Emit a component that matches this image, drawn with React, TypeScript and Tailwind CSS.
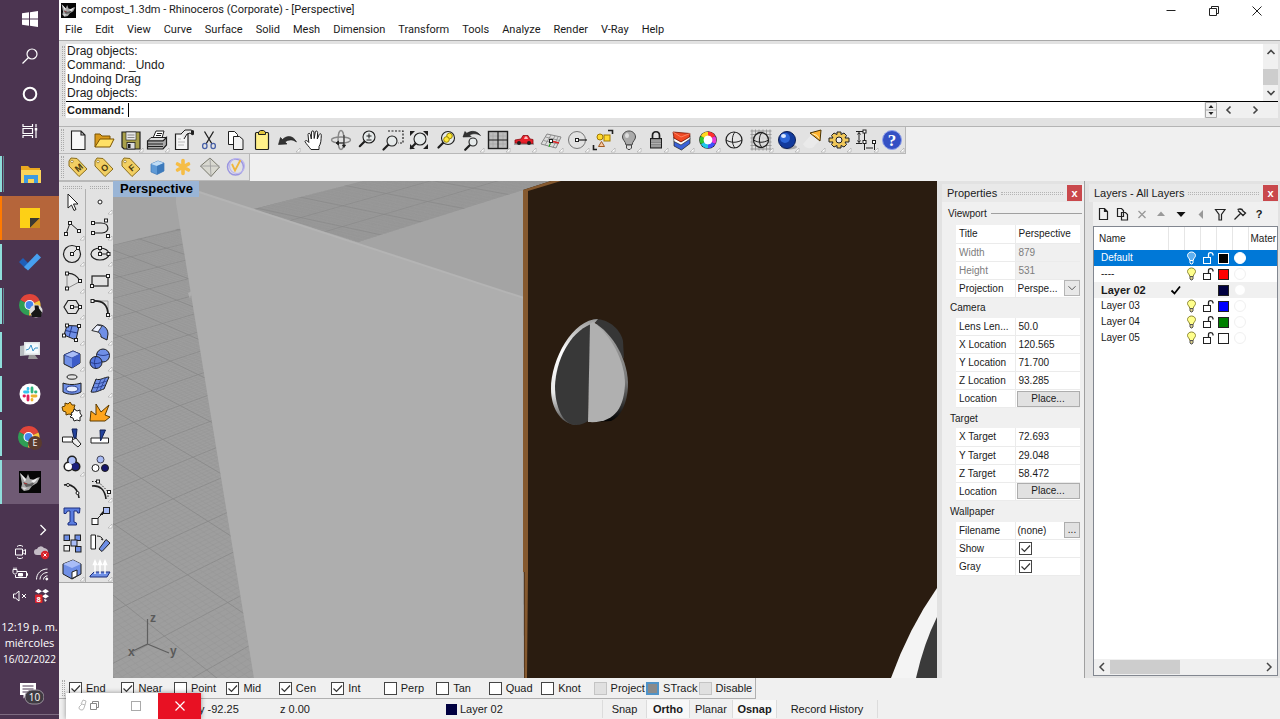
import React from "react";

type IconMap = Record<string, React.ReactNode>;

const K = "#1f1f1f";
const B = "#6f8fe6";
const LB = "#a9bdf7";

function Sq({ x, y }: { x: number; y: number }) {
  return <rect x={x - 1.5} y={y - 1.5} width="3" height="3" fill="#fff" stroke={K} strokeWidth="1" />;
}

const tag = (letter: string) => (
  <>
    <path d="M3 6 L5 3 L11 3.500 L21 14 L13 21.500 L3 11Z" fill="#f2cf63" stroke="#8a6d1c" strokeWidth="1" />
    <circle cx="6" cy="6.500" r="1.300" fill="#fff" stroke="#8a6d1c" strokeWidth="0.700" />
    <text x="12.500" y="16" fontSize="9" fontWeight="bold" textAnchor="middle" fill="#4b3b10" transform="rotate(-40 12.500 12.500)" fontFamily="Liberation Sans, sans-serif">
      {letter}
    </text>
  </>
);

const magnifier = (cx: number, cy: number, r: number) => (
  <>
    <path d={`M${cx - r * 0.7} ${cy + r * 0.7} L${cx - r * 0.7 - 5} ${cy + r * 0.7 + 5}`} stroke={K} strokeWidth="2.200" strokeLinecap="round" />
    <circle cx={cx} cy={cy} r={r} fill="#e6eaea" stroke={K} strokeWidth="1.100" />
  </>
);

const topIcons: IconMap = {
  New: <path d="M5.500 3H15l4 4v14.500H5.500Z M15 3v4h4" fill="#f6f6f6" stroke={K} strokeWidth="1.100" />,
  Open: (
    <>
      <path d="M3 19V6h5l2 2h8v3" fill="#d99a1c" stroke="#7a5200" />
      <path d="M3 19L8 11h14l-4 8Z" fill="#ffe066" stroke="#7a5200" />
    </>
  ),
  Save: (
    <>
      <path d="M3 4h18v17H5l-2-2Z" fill="#a9a04a" stroke={K} strokeWidth="1.200" />
      <rect x="7" y="4" width="10" height="8" fill="#e8e8e8" stroke={K} strokeWidth="0.600" />
      <path d="M8.500 7h7M8.500 9.500h7" stroke="#888" />
      <rect x="8" y="14.500" width="8" height="6.500" fill="#ddd" stroke={K} strokeWidth="0.800" />
      <rect x="9" y="16" width="2.500" height="4" fill={K} />
    </>
  ),
  Print: (
    <>
      <path d="M8 10L11 3h8l-2 7" fill="#fff" stroke={K} />
      <path d="M2.500 13L6 9.500h15.500L18 13Z" fill="#ddd" stroke={K} />
      <path d="M2.500 13H18l3.500-3.500V17L18 21H2.500Z" fill="#aaa" stroke={K} strokeWidth="1.200" />
      <path d="M3 16h15M3 18.500h15M12 5.500h5M11 7.500h5" stroke={K} />
    </>
  ),
  Properties: (
    <>
      <path d="M4.500 6H17v15.500H4.500Z" fill="#f5f5f5" stroke={K} strokeWidth="1.200" />
      <path d="M10 6l4-4h6l2 1v4l-3-2-3 1-3 5" fill="#e8e8e8" stroke={K} />
      <path d="M20 2.500h3v4h-3Z" fill={K} />
      <path d="M7 11h3M7 14h7M7 17h6" stroke="#bbb" />
    </>
  ),
  Cut: (
    <>
      <path d="M7.500 3.500L15 16M16.500 3.500L9 16" stroke={K} strokeWidth="1.300" />
      <ellipse cx="7.800" cy="18" rx="2.200" ry="2.600" fill="none" stroke="#4a62a8" strokeWidth="1.300" />
      <ellipse cx="16.200" cy="18" rx="2.200" ry="2.600" fill="none" stroke="#4a62a8" strokeWidth="1.300" />
    </>
  ),
  Copy: (
    <>
      <path d="M4.500 3.500h6l3 3v10h-9Z" fill="#fff" stroke={K} />
      <path d="M9.500 8.500h6l3.500 3v10H9.500Z" fill="#f2f2f2" stroke={K} />
    </>
  ),
  Paste: (
    <>
      <rect x="5.500" y="4.500" width="13" height="17" rx="1" fill="#fff08a" stroke={K} strokeWidth="1.200" />
      <path d="M8.500 6.500V4l2-1.500h3l2 1.500v2.500Z" fill="#e2c53b" stroke={K} />
    </>
  ),
  Undo: <path d="M2.500 16.500L4.500 9.500 6.500 11.500C11 7 17 7.500 20.500 14 16.500 11 12 11.500 9 14L11 16Z" fill="#333" stroke={K} strokeWidth="0.600" />,
  Pan: (
    <path
      d="M9 21.500C7 18.500 4.500 16.500 3 13.500c.3-1.500 2-1.300 3.800 1L6 6.500c0-1.500 2-1.700 2.400 0L9.300 11 9.500 4c.2-1.500 2.300-1.500 2.400 0l.3 6.500L13.300 4c.3-1.500 2.300-1.200 2.300.3L15.300 11l1.900-4.500c.6-1.300 2.300-.8 2.100.7-.3 5.300-.3 8.300-2.300 11.300v3Z"
      fill="#fff"
      stroke={K}
      strokeWidth="1"
    />
  ),
  Rotate: (
    <>
      <ellipse cx="12" cy="12" rx="9.500" ry="3" fill="none" stroke="#888" strokeWidth="1.300" />
      <ellipse cx="12" cy="12" rx="3" ry="9.500" fill="none" stroke="#888" strokeWidth="1.300" />
      <path d="M15 7v10M9 15h6M13.500 17l1.500 2.500 1.500-2.500ZM9.500 13v4L7 15Z" stroke={K} fill={K} strokeWidth="0.900" />
    </>
  ),
  Zoom: (
    <>
      {magnifier(14, 9, 6)}
      <path d="M11.500 8h5M14 5.500v5M11.500 12h5" stroke={K} />
    </>
  ),
  ZoomWindow: (
    <>
      <path d="M7 3h15v12h-5" fill="none" stroke={K} strokeDasharray="2 1.500" strokeWidth="1.200" />
      {magnifier(11, 13, 5)}
    </>
  ),
  ZoomExtents: (
    <>
      <path d="M3 3h5l-5 5ZM21 3h-5l5 5ZM3 21v-5l5 5ZM21 21v-5l-5 5Z" fill={K} />
      {magnifier(13, 11, 6)}
    </>
  ),
  ZoomSelected: (
    <>
      {magnifier(14, 10, 6.5)}
      <circle cx="15.500" cy="8" r="2.800" fill="#ffe93a" stroke="#998600" />
      <circle cx="12.500" cy="11.500" r="2.800" fill="#ffe93a" stroke="#998600" />
    </>
  ),
  UndoView: (
    <>
      <path d="M3 9L5 3.500l1.800 1.800C12 2 17 3 20.500 7.500c-4-2.500-8-2-11-.5l1.700 1.700Z" fill="#333" stroke={K} strokeWidth="0.600" />
      {magnifier(13, 14, 4)}
    </>
  ),
  FourViews: (
    <>
      <rect x="2.500" y="3.500" width="19" height="17" fill="#bdbdbd" stroke={K} strokeWidth="1.400" />
      <path d="M7 4v16M17 4v16M3 8h18M3 16h18" stroke="#a4a4a4" strokeWidth="0.700" />
      <path d="M12 3.500v17M2.500 12h19" stroke={K} strokeWidth="1.200" />
    </>
  ),
  Car: (
    <>
      <path d="M2 16h20" stroke="#666" />
      <path d="M3 15v-3l6-1 2-3.500h5l2 3.500 3 .5v4Z" fill="#e8202a" stroke="#8a0b12" strokeWidth="0.800" />
      <circle cx="7" cy="15" r="2" fill={K} />
      <circle cx="17" cy="15" r="2" fill={K} />
      <path d="M12 11l1-2.500h2l1 2.500Z" fill="#fbb" />
    </>
  ),
  CPlane: (
    <>
      <path d="M8 6l14 3-5 11-15-4Z" fill="#ddd" stroke="#888" />
      <path d="M12 7l-6 10M16 8l-6 10.500M19 9l-5 10.500M6.500 9l14 3.500M4.500 12.500L19 16" stroke="#888" strokeWidth="0.800" />
      <path d="M12 13l8 2" stroke="#d22" strokeWidth="1.500" />
      <path d="M12 13l-2 6" stroke="#2a2" />
      <Sq x={12} y={13} />
    </>
  ),
  Circle: (
    <>
      <circle cx="12" cy="12" r="8.500" fill="none" stroke="#777" />
      <path d="M12 12h10" stroke={K} strokeWidth="1.200" />
      <Sq x={12} y={12} />
    </>
  ),
  Select: (
    <>
      <circle cx="9" cy="9" r="3" fill="#ffd92e" stroke="#a07800" />
      <rect x="13" y="7" width="6" height="6" fill="#ffd92e" stroke="#a07800" />
      <path d="M10.500 13.500l3 5h-6Z" fill="#fbc9a0" stroke="#a05a20" />
      <path d="M17 2.500h4.500V6M2.500 17v4.500H6" fill="none" stroke={K} strokeWidth="1.600" />
    </>
  ),
  Hide: (
    <>
      <path d="M12 3c-4 0-6.500 3-6.500 6 0 3 3 4 3.500 8h6c.5-4 3.500-5 3.500-8 0-3-2.500-6-6.500-6Z" fill="#aaa" stroke="#444" />
      <path d="M9.500 17h5v3l-1.500 1.500h-2L9.500 20Z" fill="#ddd" stroke="#444" />
      <ellipse cx="10" cy="7.500" rx="2" ry="2.500" fill="#ddd" />
    </>
  ),
  Lock: (
    <>
      <path d="M8.500 11V7.500c0-5 7-5 7 0V11" fill="none" stroke={K} strokeWidth="1.700" />
      <rect x="6.500" y="10.500" width="11" height="9.500" fill="#888" stroke={K} />
      <path d="M7 13h10M7 15.500h10M7 18h10" stroke="#bbb" strokeWidth="0.800" />
    </>
  ),
  Layers: (
    <>
      <path d="M4 13l7 3.500 9-6v5l-8.500 6.500L4 18Z" fill="#3b62d8" stroke={K} strokeWidth="0.700" />
      <path d="M3.500 9.500l7.500 4 9-6v3.500l-9 6-7-3.500Z" fill="#fff" stroke={K} strokeWidth="0.600" />
      <path d="M3 4l17 1.500-.5 3.500-8.500 5-7-4Z" fill="#f04a24" stroke="#7a1200" strokeWidth="0.800" />
      <path d="M3 4l8 5 9-3.500" fill="none" stroke="#ff9a7a" strokeWidth="0.700" />
    </>
  ),
  Render: (
    <>
      <circle cx="12" cy="12" r="8.800" fill={K} />
      <circle cx="12" cy="12" r="5" fill="#fff" />
      <path d="M12 5.700A6.300 6.300 0 0 1 17.500 8.900" stroke="#ff3030" strokeWidth="3.800" fill="none" />
      <path d="M17.500 8.900A6.300 6.300 0 0 1 17.500 15.100" stroke="#e838d8" strokeWidth="3.800" fill="none" />
      <path d="M17.500 15.100A6.300 6.300 0 0 1 12 18.300" stroke="#4050ff" strokeWidth="3.800" fill="none" />
      <path d="M12 18.300A6.300 6.300 0 0 1 6.500 15.100" stroke="#20c8e8" strokeWidth="3.800" fill="none" />
      <path d="M6.500 15.100A6.300 6.300 0 0 1 6.500 8.900" stroke="#30c830" strokeWidth="3.800" fill="none" />
      <path d="M6.500 8.900A6.300 6.300 0 0 1 12 5.700" stroke="#ffd820" strokeWidth="3.800" fill="none" />
    </>
  ),
  Shade: (
    <>
      <circle cx="12" cy="12" r="8" fill="#e6e6e6" stroke={K} strokeWidth="1.200" />
      <path d="M13 4C9.500 8 9.500 16 13 20M4 12c5 3 11 3 16 0" fill="none" stroke={K} />
    </>
  ),
  Wire: (
    <>
      <path d="M3 1.500v21M6.500 1.500v21M10 1.500v21M14 1.500v21M17.500 1.500v21M21 1.500v21M1.500 3h21M1.500 6.500h21M1.500 10h21M1.500 14h21M1.500 17.500h21M1.500 21h21" stroke="#999" />
      <circle cx="12" cy="12" r="7.500" fill="#ddd" fillOpacity="0.800" stroke={K} strokeWidth="1.300" />
      <path d="M13 4.500C9.500 8 9.500 16 13 19.500M4.500 12c5 3 10 3 15 0" fill="none" stroke={K} />
    </>
  ),
  Sphere: (
    <>
      <ellipse cx="14" cy="19" rx="8" ry="2.500" fill="#aaa" />
      <circle cx="12" cy="12" r="8.500" fill="#123a9c" stroke="#0a1d54" />
      <circle cx="10" cy="10" r="5" fill="#2c66d8" />
      <ellipse cx="8.500" cy="8" rx="2.500" ry="2" fill="#dbe8ff" />
    </>
  ),
  Spot: (
    <>
      <path d="M10 7L2 16c2 5 10 6 12 1l5-5Z" fill="#eaeaea" />
      <path d="M9 5l11-3-1 11Z" fill="#ffb22e" stroke="#4a3200" />
      <path d="M11 5.500l5 2 2 3" fill="none" stroke="#fff0b0" />
    </>
  ),
  Options: (
    <>
      <path d="M10 4h4v2.500l3-1.500 2.500 2.500L18 10h4v4h-4l1.500 2.500L17 19l-3-1.500V20h-4v-2.500L7 19l-2.500-2.500L6 14H2v-4h4L4.500 7.500 7 5l3 1.500Z" fill="#f0c85a" stroke={K} />
      <circle cx="12" cy="12" r="3" fill="#eee" stroke={K} />
    </>
  ),
  Dims: (
    <>
      <path d="M2 3.500h10M5 4.500v10M2 15.500h6M10.500 15v7M20.500 15v7M12 20h7M3.500 6.500L5 4.500l1.500 2M3.500 12.500l1.500 2 1.500-2M10.500 5v8" fill="none" stroke={K} />
      <Sq x={10.5} y={3.5} />
      <Sq x={10.5} y={14} />
      <Sq x={20} y={14} />
    </>
  ),
  Help: (
    <>
      <circle cx="12" cy="12" r="9.500" fill="#3450c4" stroke="#8fa0ea" />
      <text x="12" y="18" fontSize="17" fontWeight="bold" textAnchor="middle" fill="#fff" fontFamily="Liberation Serif, serif">
        ?
      </text>
    </>
  ),
};

const topFly = ["Save", "Print", "Undo", "UndoView", "FourViews", "Car", "CPlane", "Circle", "Select", "Hide", "Lock", "Layers", "Render", "Wire", "Sphere", "Spot", "Options", "Dims", "Help"];

const vrayIcons: IconMap = {
  "V-Ray Materials": tag("M"),
  "V-Ray Options": tag("O"),
  "V-Ray Frame": tag("F"),
  "V-Ray Cube": (
    <>
      <path d="M6 9l7-3 6 2v8l-7 3.500-6-2.500Z" fill="#5f9ad6" stroke="#3f78b4" strokeWidth="0.700" />
      <path d="M6 9l7-3 6 2-7 3Z" fill="#bfdcf5" />
      <path d="M12 11l7-3v8l-7 3.500Z" fill="#3d7abc" />
    </>
  ),
  "V-Ray Sun": <path d="M12 5.500v13M6.500 9l11 6M17.500 9l-11 6" stroke="#f6bd45" strokeWidth="3.600" strokeLinecap="round" />,
  "V-Ray Plane": (
    <>
      <path d="M2.500 11L12 3l9.500 9-8.500 9.500Z" fill="#d8d8d0" stroke="#77776a" />
      <path d="M2.500 11h19M12 3l1 18.500" stroke="#999" fill="none" strokeWidth="0.800" />
    </>
  ),
  "V-Ray Check": (
    <>
      <circle cx="11.500" cy="12" r="8" fill="none" stroke="#9a95e0" strokeWidth="1.500" />
      <circle cx="13" cy="11" r="7.500" fill="none" stroke="#bcb6ee" strokeWidth="1.200" />
      <path d="M8 9l3 6.500L16.500 5" fill="none" stroke="#f0b63c" strokeWidth="1.800" />
    </>
  ),
};

const toolIcons: [string, React.ReactNode, boolean][] = [
  ["Pointer", <path d="M8 4v14l3.500-3 2.500 5.500 2-1-2.500-5.500h4.500Z" fill="#fff" stroke={K} />, false],
  ["Point", <circle cx="12" cy="12" r="2" fill="#fff" stroke={K} />, true],
  ["Polyline", <><path d="M6 18l4-11 9 8" fill="none" stroke={K} /><Sq x={6} y={18} /><Sq x={10} y={7} /><Sq x={19} y={15} /></>, true],
  ["Curve", <><path d="M5 7h8c9 0 9 10 1 10H5" fill="none" stroke={K} strokeWidth="1.200" /><Sq x={5} y={7} /><Sq x={18} y={4.5} /><Sq x={5} y={17} /><Sq x={20} y={20} /></>, true],
  ["Circle tool", <><circle cx="12" cy="12" r="8.500" fill="none" stroke={K} strokeWidth="1.200" /><path d="M12 12l6-6" stroke={K} /><Sq x={12} y={12} /><Sq x={18} y={6} /></>, true],
  ["Ellipse", <><ellipse cx="12" cy="12" rx="9" ry="6" fill="none" stroke={K} strokeWidth="1.200" /><path d="M12 6v6h9" fill="none" stroke={K} /><Sq x={12} y={6} /><Sq x={12} y={12} /><Sq x={20.5} y={12} /></>, true],
  ["Arc", <><path d="M7 4.500v15M7 19.500l13-7" stroke="#888" fill="none" /><path d="M7 4.500c6-1 11 3 13 7.500" fill="none" stroke={K} strokeWidth="1.200" /><Sq x={7} y={4.5} /><Sq x={7} y={19.5} /><Sq x={20} y={12} /></>, true],
  ["Rectangle", <><rect x="4" y="7" width="16" height="10" fill="none" stroke={K} strokeWidth="1.200" /><Sq x={20} y={7} /><Sq x={4} y={17} /></>, true],
  ["Polygon", <><path d="M8 5.500h8l4 6.500-4 6.500H8L4 12Z" fill="none" stroke={K} strokeWidth="1.200" /><path d="M12 12h8" stroke={K} /><Sq x={12} y={12} /><Sq x={20} y={12} /></>, true],
  ["Fillet", <><path d="M4 6h16v14" fill="none" stroke="#999" /><path d="M4 6c11-1 16 4 16 14" fill="none" stroke={K} strokeWidth="1.800" /><Sq x={4.5} y={6} /><Sq x={20} y={20} /></>, true],
  ["Surface", <><path d="M7 4.500l12 .5-3 14-12-5Z" fill={B} stroke={K} /><path d="M12 5l-3 11M5.500 9.500l12 2.500" stroke="#22388a" /><Sq x={7} y={4.5} /><Sq x={19} y={5} /><Sq x={4} y={14.5} /><Sq x={16} y={19} /></>, true],
  ["Loft", <><path d="M9 4c6-1 11 3 11 9l-1 6-6-3c0-4-3-6-9-6.500Z" fill={B} stroke={K} /><path d="M9 4l5 1-4 6-6-1.500Z" fill="#eef2ff" stroke={K} strokeWidth="0.800" /></>, true],
  ["Box", <><path d="M4 8l9-4 7 3v9l-8 5-8-4Z" fill={B} stroke={K} /><path d="M4 8l9-4 7 3-8 4Z" fill={LB} stroke="#22388a" strokeWidth="0.700" /><path d="M12 11l8-4v9l-8 5Z" fill="#3d5cc8" /></>, true],
  ["Spheres", <><circle cx="15" cy="8.500" r="6.500" fill={B} stroke={K} /><circle cx="8" cy="15.500" r="6" fill="#5577dd" stroke={K} /><path d="M2 15c4 2 8 2 12 0M8 9.500c-2 4-2 8 0 12M9 7c4 2 8 2 12 0" stroke="#1c2f7c" fill="none" strokeWidth="0.800" /></>, true],
  ["Pipe", <><ellipse cx="12" cy="4" rx="5" ry="2.200" fill="none" stroke={K} /><path d="M3 10c5 2 13 2 18 0v9c-5 3-13 3-18 0Z" fill={B} stroke={K} /><ellipse cx="12" cy="16" rx="6" ry="3" fill="#e8eefe" stroke="#22388a" /></>, true],
  ["Patch", <><path d="M8 6c4 2 8-2 13-2l-5 12c-4 1-8 4-13 3Z" fill={B} stroke={K} /><path d="M13 6l-5 13M17.500 5l-6 13M6.500 10c4 2 8-1 12.500-2M4.500 14.500c4 1 8-1 12.500-2.500" stroke="#22388a" fill="none" strokeWidth="0.800" /></>, true],
  ["Puzzle", <><path d="M2 7l3-1 0-3 3 1 2-2 2 3 3 0-1 3 2 3-3 1-1 3-3-1-3 1 0-3-3-1Z" fill="#f2a71e" stroke="#5a3a00" /><path d="M11 13l2-1 1-3 3 2 3-1v3l2 3-2 1v4l-3-1-3 1-1-3-3-1 2-2Z" fill="#fff" stroke={K} /></>, false],
  ["Explode", <path d="M2 21l1-10 5 4V4l5 8 8-7-4 10 5 2-5 4Z" fill="#ffa41c" stroke="#5a3a00" />, false],
  ["Trim", <><path d="M2.500 11h10v5h-10Z" fill="#fff" stroke={K} /><path d="M12 14l4-2 5 6-3 3-5-4Z" fill="#eee" stroke={K} /><path d="M12 3h5l-1 9h-2Z" fill="#23429c" stroke="#101f52" /></>, false],
  ["Split", <><path d="M3 12h17.500v5H3Z" fill="#fff" stroke={K} /><path d="M12 4h5.500l-4 9-1 2Z" fill="#23429c" stroke="#101f52" /></>, false],
  ["Boolean union", <><circle cx="12" cy="8.500" r="5" fill={K} /><circle cx="8.500" cy="14.500" r="5" fill={K} /><circle cx="15.500" cy="14.500" r="5" fill={K} /><circle cx="12" cy="8.500" r="3.500" fill={LB} /><circle cx="8.500" cy="14.500" r="3.500" fill="#fff" /><circle cx="15.500" cy="14.500" r="3.500" fill="#1a1f7c" /></>, true],
  ["Group", <><circle cx="12.500" cy="7.500" r="3.500" fill={LB} stroke="#445" /><circle cx="7.500" cy="16" r="3.500" fill="#fff" stroke={K} /><circle cx="17" cy="16" r="3.500" fill="#15156c" stroke={K} /></>, false],
  ["Edit points", <><path d="M4 7c8-2 14 4 15 13" fill="none" stroke={K} strokeWidth="1.600" /><circle cx="8" cy="7" r="1.500" fill="#fff" stroke={K} /><circle cx="17.500" cy="15" r="1.500" fill="#fff" stroke={K} /></>, false],
  ["Control points", <><path d="M4 8c8-1 13 4 14 13" fill="none" stroke={K} strokeWidth="1.600" /><path d="M4 3.500h6l10 10v7" fill="none" stroke={K} strokeDasharray="1.500 1.500" /><Sq x={10} y={3.5} /><Sq x={21} y={14} /></>, true],
  ["Text", <path d="M4 4h16l-.5 5h-2L17 7h-3v11l2.500 1v2H8v-2l2-1V7H7.500L6 9.500H4Z" fill="#5a7de0" stroke="#1c2f7c" />, false],
  ["Move", <><path d="M9 15l8-8" stroke={K} /><path d="M15 7v4h-3.500Z" fill={K} /><rect x="4" y="14.500" width="6" height="6" fill="#fff" stroke={K} /><rect x="15.500" y="3.500" width="6" height="6" fill={LB} stroke={K} /></>, true],
  ["Array", <><rect x="4" y="4" width="5.500" height="5.500" fill={B} stroke={K} /><rect x="15" y="4" width="5.500" height="5.500" fill={B} stroke={K} /><rect x="4" y="14.500" width="5.500" height="5.500" fill="#eee" stroke={K} /><rect x="11" y="9" width="6" height="6" fill={LB} stroke={K} /><rect x="15.500" y="15.500" width="5.500" height="5.500" fill={B} stroke={K} /></>, false],
  ["Orient", <><path d="M3 4h4.500v14H3Z" fill="#fff" stroke={K} /><path d="M11 18L18 8.500l4 3.500-8 8.500Z" fill={B} stroke={K} /><path d="M9 5c3 0 5 1 6 4l-2-1" fill="none" stroke={K} /></>, false],
  ["Block", <><path d="M3 7l10-4 8 4v10l-9 5-9-5Z" fill={B} stroke={K} /><path d="M3 7l10-4 8 4-9 4Z" fill={LB} /><path d="M12 15l5-2v6l-5 2.500Z" fill="#fff" stroke={K} /></>, true],
  ["Extrude", <><path d="M2 19l4-4h16l-3 5H2Z" fill={B} stroke="#1c2f7c" /><path d="M7 17V6M12 17V6M17 17V6M5.500 7.500L7 4l1.500 3.500ZM10.500 7.500L12 4l1.500 3.500ZM15.500 7.500L17 4l1.500 3.500Z" stroke="#fff" fill="#fff" strokeWidth="1.500" /></>, true],
];

function Icon({ children, fly = false }: { children: React.ReactNode; fly?: boolean }) {
  return (
    <svg viewBox="0 0 24 24" className="size-6 overflow-visible" fill="none" aria-hidden="true">
      {children}
      {fly && <path d="M20 24L24 20V24Z" fill="#fff" stroke="#999" strokeWidth="0.500" />}
    </svg>
  );
}

function Check({ id, checked, tone = "plain" }: { id: string; checked?: boolean; tone?: "plain" | "off" | "track" }) {
  const look = { plain: "border-[#444] bg-white", off: "border-[#c4c4c4] bg-[#e0e0e0]", track: "border-2 border-[#4f93c8] bg-[#8a8a8a]" }[tone];
  return (
    <span className="relative size-[13px] shrink-0">
      <input id={id} type="checkbox" defaultChecked={checked} className={`peer block size-[13px] appearance-none border ${look}`} />
      <svg viewBox="0 0 13 13" className="pointer-events-none absolute inset-0 hidden size-[13px] peer-checked:block" fill="none" aria-hidden="true">
        <path d="M2.500 6.500l3 3 5.500-6" stroke="#333" strokeWidth="1.200" />
      </svg>
    </span>
  );
}

function Chrome({ badge }: { badge: React.ReactNode }) {
  return (
    <svg viewBox="0 0 26 26" className="size-[26px]" fill="none" aria-hidden="true">
      <path d="M11.500 12L2.300 7A10.500 10.500 0 0 1 21.500 7.500Z" fill="#e0453a" />
      <path d="M11.500 12L21.500 7.500A10.500 10.500 0 0 1 11 22.500Z" fill="#f5c33b" />
      <path d="M11.500 12L11 22.500A10.500 10.500 0 0 1 2.300 7Z" fill="#2f9e55" />
      <circle cx="11.500" cy="12" r="5" fill="#fff" />
      <circle cx="11.500" cy="12" r="3.900" fill="#4584ec" />
      {badge}
    </svg>
  );
}

function Rhino({ className }: { className: string }) {
  return (
    <svg viewBox="0 0 22 22" className={className} fill="none" aria-hidden="true">
      <rect width="22" height="22" fill="#060606" />
      <path d="M1 2l6 6 2-5 2 5 5 1 5-3-3 6-5 3-3 4-5 1-3-3 1-4Z" fill="#a8a8a8" />
      <path d="M4 11l6 2 6-2-3 4-6 1Z" fill="#5d5d5d" />
      <path d="M1 2l6 6-1 3Z" fill="#f0f0f0" />
      <path d="M12 10l8-4-5 6Z" fill="#ececec" />
      <path d="M3 16l5 1-3 2Z" fill="#ddd" />
      <path d="M5 12l3 1" stroke="#a33" />
    </svg>
  );
}

const shortBar = "h-9 w-[2px] bg-[#8fdedb]";
const doubleBar = "h-9 w-1 border-x border-r-[#5f8f95] border-l-2 border-l-[#8fdedb]";

const apps: { name: string; bg?: string; bar: string; icon: React.ReactNode }[] = [
  {
    name: "File Explorer",
    bar: doubleBar,
    icon: (
      <svg viewBox="0 0 24 24" className="size-6" fill="none">
        <path d="M2 4h7l2 2h10v14H2Z" fill="#e9a820" />
        <path d="M2 8h20v13H2Z" fill="#fbd55a" />
        <path d="M5 13h14v8h-4v-4H9v4H5Z" fill="#3d9be0" />
      </svg>
    ),
  },
  {
    name: "Sticky Notes",
    bg: "bg-[#b5653a]",
    bar: "h-11 w-[2px] bg-[#ff7a00]",
    icon: (
      <svg viewBox="0 0 24 24" className="size-6" fill="none">
        <path d="M2 2h20v10L12 22H2Z" fill="#fdd016" />
        <path d="M12 22V12h10Z" fill="#3b3930" />
        <path d="M22 12v10H12Z" fill="#c98a1c" />
      </svg>
    ),
  },
  {
    name: "To Do",
    bar: shortBar,
    icon: (
      <svg viewBox="0 0 24 24" className="size-6" fill="none">
        <path d="M1 12l4-4 7 7-4 4Z" fill="#1f5fb8" />
        <path d="M6 17L19 3.500l4 4L10 20.500Z" fill="#47a0f0" />
      </svg>
    ),
  },
  {
    name: "Chrome",
    bar: doubleBar,
    icon: (
      <Chrome
        badge={
          <>
            <circle cx="18" cy="18" r="6.500" fill="#ddd" />
            <path d="M16.500 12.500h4l.5 3 3 4-1 4.500h-9l-1-3.500 4-4Z" fill="#161616" />
          </>
        }
      />
    ),
  },
  {
    name: "Monitor",
    bar: shortBar,
    icon: (
      <svg viewBox="0 0 24 24" className="size-6" fill="none">
        <path d="M2 8l12-2v11L2 18Z" fill="#b8bdc0" />
        <path d="M6 4h16v13H6Z" fill="#dfe3e5" />
        <path d="M7.500 5.500h13v10h-13Z" fill="#f4fafd" />
        <path d="M8 12l3-1 2-4 2 6 2-3h3" stroke="#3a93c8" />
        <path d="M11 17h6l3 4H10Z" fill="#999" />
      </svg>
    ),
  },
  {
    name: "Slack",
    bar: shortBar,
    icon: (
      <svg viewBox="0 0 24 24" className="size-6" fill="none">
        <circle cx="12" cy="12" r="10.500" fill="#fff" />
        <path d="M10 6.500v.5M6.500 10h3.500" stroke="#36c5f0" strokeWidth="2.800" strokeLinecap="round" />
        <path d="M14 6v4M17.500 10h.5" stroke="#2eb67d" strokeWidth="2.800" strokeLinecap="round" />
        <path d="M14 14h4M14 17.500v.5" stroke="#ecb22e" strokeWidth="2.800" strokeLinecap="round" />
        <path d="M10 14v4M6 14h.5" stroke="#e01e5a" strokeWidth="2.800" strokeLinecap="round" />
      </svg>
    ),
  },
  {
    name: "Chrome profile E",
    bar: shortBar,
    icon: (
      <Chrome
        badge={
          <>
            <circle cx="18" cy="18" r="7" fill="#5a3b2e" />
            <text x="18" y="21" fontSize="9" textAnchor="middle" fill="#fff" fontFamily="Open Sans, sans-serif">
              E
            </text>
          </>
        }
      />
    ),
  },
  { name: "Rhinoceros", bg: "bg-[#6f5a74]", bar: "h-11 w-[2px] bg-[#8fdedb]", icon: <Rhino className="size-[22px]" /> },
];

function Taskbar() {
  const tb = "grid place-items-center";
  return (
    <nav className="flex w-[59px] shrink-0 flex-col bg-[#4b3450] font-['Open_Sans',sans-serif] text-white" aria-label="Taskbar">
      <div className="grid h-[150px] grid-rows-4">
        <button className={tb} aria-label="Start">
          <svg viewBox="0 0 16 16" className="size-4">
            <path d="M0 2.300L7 1.300V7.500H0ZM8 1.200L16 0v7.500H8ZM0 8.500h7v6.200l-7-1ZM8 8.500h8V16l-8-1.200Z" fill="#fff" />
          </svg>
        </button>
        <button className={tb} aria-label="Search">
          <svg viewBox="0 0 16 16" className="size-4" fill="none" stroke="#fff" strokeWidth="1.200">
            <circle cx="10" cy="6" r="5" />
            <path d="M6.500 9.500L.5 15.500" />
          </svg>
        </button>
        <button className={tb} aria-label="Cortana">
          <svg viewBox="0 0 16 16" className="size-4" fill="none" stroke="#fff" strokeWidth="2">
            <circle cx="8" cy="8" r="6.300" />
          </svg>
        </button>
        <button className={tb} aria-label="Task view">
          <svg viewBox="0 0 16 16" className="size-4" fill="none" stroke="#fff" strokeWidth="1.200">
            <path d="M1 1v2.500h9.500V1M1 15v-2.500h9.500V15M1 5.500h9.500v5H1ZM14 1v3M14 8v7" />
            <path d="M13 5h2v2.500h-2Z" fill="#fff" strokeWidth="0.500" />
          </svg>
        </button>
      </div>
      <div className="mt-0.5 flex flex-col">
        {apps.map((a) => (
          <button key={a.name} aria-label={a.name} className={`flex h-11 items-center ${a.bg ?? ""}`}>
            <span className={`shrink-0 ${a.bar}`} />
            <span className="grid flex-1 place-items-center pr-0.5">{a.icon}</span>
          </button>
        ))}
      </div>
      <div className="mt-4 flex flex-col text-white">
        <button aria-label="Show hidden icons" className="flex h-5 justify-end pr-3">
          <svg viewBox="0 0 8 14" className="h-5 w-2" fill="none" stroke="#fff" strokeWidth="1.300">
            <path d="M1.500 2L6.500 7l-5 5" />
          </svg>
        </button>
        <div className="grid grid-cols-2 gap-x-2 gap-y-1.5 px-3 pt-1">
          <svg viewBox="0 0 16 16" className="size-4" fill="none" stroke="#fff">
            <path d="M3.500 5h7v6h-7ZM10.500 7.500l3-2v5l-3-2M5 2.500c2-1.500 4-1.500 6 0M5 13.500c2 1.500 4 1.500 6 0" />
          </svg>
          <svg viewBox="0 0 16 16" className="size-4" fill="none">
            <path d="M3 11a3 3 0 0 1 0-6 4 4 0 0 1 7-1 4 4 0 0 1 4 5v2Z" fill="#c4bcc6" />
            <circle cx="11" cy="11" r="4.200" fill="#d8242c" />
            <path d="M9.500 9.500l3 3M12.500 9.500l-3 3" stroke="#fff" />
          </svg>
          <svg viewBox="0 0 16 16" className="size-4" fill="none" stroke="#fff">
            <path d="M5 5.500h9.500v6H3.500V9M14.500 7.500h1v2h-1M1 3.500h4v3c0 2-4 2-4 0ZM2 1.500v2M4 1.500v2" />
            <path d="M6.500 7.500h4v2.500h-4Z" fill="#fff" />
          </svg>
          <svg viewBox="0 0 16 16" className="size-4" fill="none" stroke="#fff">
            <path d="M2.500 13.500C2.500 7.500 7 3 13.500 3M6 13.500C6 9.500 9.500 6.500 13.500 6.500M9.500 13.500c0-2 2-3.700 4-3.700" />
            <circle cx="12.800" cy="13" r="1" fill="#fff" />
          </svg>
          <svg viewBox="0 0 16 16" className="size-4" fill="none" stroke="#fff">
            <path d="M1.500 6h2l3.500-3v10L3.500 10h-2ZM10 6l4 4M14 6l-4 4" />
          </svg>
          <svg viewBox="0 0 16 16" className="size-4" fill="none">
            <path d="M4.500 1L8 3.200 4.500 5.500 1 3.200ZM11.500 1L15 3.200l-3.500 2.300L8 3.200ZM11.500 6L15 8.200l-3.500 2.300L8 8.200ZM10 11l3 1-2 2Z" fill="#fff" />
            <rect x="1" y="6.500" width="7.500" height="8.500" rx="1" fill="#d8242c" />
            <text x="4.700" y="13.500" fontSize="7.500" fontWeight="bold" textAnchor="middle" fill="#fff" fontFamily="Open Sans, sans-serif">
              8
            </text>
          </svg>
        </div>
      </div>
      <div className="mt-[15px] text-center text-[11px] leading-4 whitespace-nowrap">
        <div>12:19 p. m.</div>
        <div>miércoles</div>
        <div className="text-[10px] leading-4">16/02/2022</div>
      </div>
      <button aria-label="Notifications" className="mt-auto mb-1 grid h-11 place-items-center border-b border-[#7d6b81]">
        <svg viewBox="0 0 28 26" className="h-[26px] w-7" fill="none">
          <path d="M4 3h16v12h-9l-3.500 3.500V15H4Z" fill="#fff" />
          <path d="M6.500 6h11M6.500 9h11M6.500 12h7" stroke="#4b3450" />
          <rect x="9" y="10" width="19" height="14" rx="7" fill="#3f3b42" stroke="#99909b" />
          <text x="18.500" y="21" fontSize="10" textAnchor="middle" fill="#fff" fontFamily="Open Sans, sans-serif">
            10
          </text>
        </svg>
      </button>
    </nav>
  );
}

const risingY = [45, 93, 145, 205, 264, 325, 385, 450, 522, 600, 685, 780, 885, 1005, 1145, 1300, 1480, 1690];
const risingS = [-0.23, -0.24, -0.25, -0.26, -0.28, -0.3, -0.31, -0.33, -0.345, -0.365, -0.38, -0.41, -0.435, -0.46, -0.495, -0.53, -0.57, -0.61];
const fallingY = [-60, 0, 60, 132, 215, 310, 420, 540, 690, 880, 1095, 1340];
const fallingS = [0.3, 0.34, 0.38, 0.41, 0.44, 0.485, 0.53, 0.59, 0.645, 0.69, 0.8, 0.9];

function gridLines(ys: number[], ss: number[]) {
  const out: { y: number; s: number; major: boolean }[] = [];
  for (let i = 0; i < ys.length; i++) {
    const y = ys[i] / 3 + 49;
    out.push({ y, s: ss[i], major: true });
    if (i + 1 < ys.length) {
      for (let k = 1; k < 10; k++) {
        const t = k / 10;
        out.push({ y: y + ((ys[i + 1] - ys[i]) / 3) * t, s: ss[i] + (ss[i + 1] - ss[i]) * t, major: false });
      }
    }
  }
  return out;
}

const nearLines = [...gridLines(risingY, risingS), ...gridLines(fallingY, fallingS)];
const farRising = Array.from({ length: 41 }, (_, i) => ({ y: 66 + i * 2.35, s: -0.27 - i * 0.0012, major: i % 10 === 0 }));
const farFalling = Array.from({ length: 90 }, (_, i) => ({ y: -95 + i * 2.6, s: 0.16 + i * 0.0016, major: i % 7 === 0 }));

function Scene() {
  return (
    <svg viewBox="0 0 824 497" preserveAspectRatio="xMinYMin slice" className="block h-full w-full" role="img" aria-label="Perspective viewport">
      <defs>
        <clipPath id="near"><path d="M0 64L68 47 141 497H0Z" /></clipPath>
        <clipPath id="far"><path d="M141 28L250 0H447L410 9 245 61Z" /></clipPath>
        <linearGradient id="rim" x1="0" y1="0" x2="0" y2="1">
          <stop offset="0" stopColor="#999" />
          <stop offset="0.300" stopColor="#fff" />
          <stop offset="0.700" stopColor="#e8e8e8" />
          <stop offset="1" stopColor="#444" />
        </linearGradient>
        <linearGradient id="rim2" x1="0" y1="0" x2="0" y2="1">
          <stop offset="0" stopColor="#aaa" />
          <stop offset="0.600" stopColor="#777" />
          <stop offset="1" stopColor="#000" />
        </linearGradient>
      </defs>
      <rect width="824" height="497" fill="#a4a4a4" />
      <g clipPath="url(#near)">
        <rect width="200" height="497" fill="#9e9e9e" />
        {nearLines.map((l, i) => (
          <path key={i} d={`M0 ${l.y}L160 ${l.y + 160 * l.s}`} stroke={l.major ? "#888" : "#979797"} strokeWidth={l.major ? 0.8 : 0.5} />
        ))}
      </g>
      <g clipPath="url(#far)">
        <rect width="460" height="100" fill="#999" />
        {[...farRising, ...farFalling].map((l, i) => (
          <path key={i} d={`M0 ${l.y}L460 ${l.y + 460 * l.s}`} stroke={l.major ? "#888" : "#949494"} strokeWidth={l.major ? 0.7 : 0.4} />
        ))}
      </g>
      <path d="M63 6L86 11 411 117V497H141L63 22Z" fill="#aeaeae" />
      <path d="M86 11L411 117" stroke="#b4b4b4" strokeWidth="2" />
      <path d="M77 118l-2-6 4-2Z" fill="#aeaeae" />
      <path d="M410 9L438 0H824V497H411Z" fill="#2a1c10" />
      <path d="M410 9L438 0H448L415 10V391L414 497H411.500V391H410Z" fill="#85592f" />
      <path d="M480 138C497 137 508 150 510 160L511 178 500 165Z" fill="#363636" />
      <path d="M480 141C500 152 516 180 515 206 514 222 508 236 498 240L480 241Z" fill="url(#rim2)" />
      <path d="M485 138C460 138 438 178 438 208 438 226 447 242 462 244L470 220 480 144Z" fill="url(#rim)" />
      <path d="M478 143C456 152 443 180 442 205 442 226 450 244 463 244 468 244 472 242 475 240Z" fill="#383838" />
      <path d="M477 143L480 141C498 154 512 180 512 203 511 225 503 243 475 241Z" fill="#b0b0b0" />
      <path d="M824 407Q796 447 778 497H824Z" fill="#f4f4f4" />
      <path d="M824 436Q811 462 803 497H824Z" fill="#3a3a3a" />
      <g stroke="#5f5f5f" strokeWidth="1.200" fill="none">
        <path d="M34.500 438V463L20 470M34.500 463L56 472" />
      </g>
      <g fill="#5a5a5a" fontSize="12" fontWeight="bold" fontFamily="Liberation Sans, sans-serif">
        <text x="37" y="441">z</text>
        <text x="15" y="475">x</text>
        <text x="57" y="474">y</text>
      </g>
    </svg>
  );
}

function PanelTitle({ children }: { children: React.ReactNode }) {
  return (
    <div className="flex h-[18px] items-center gap-1 bg-[#e9e9e9] pl-[5px] text-[11px]">
      <h2 className="whitespace-nowrap">{children}</h2>
      <span className="h-[3px] min-w-0 flex-1 border-y border-dotted border-[#b5b5b5]" />
      <button aria-label="Close panel" className="grid h-4 w-[15px] shrink-0 place-items-center bg-[#c9484c] text-[11px] leading-none font-bold text-white">
        x
      </button>
    </div>
  );
}

type Row = [string, React.ReactNode, boolean?];

function PropTable({ rows }: { rows: Row[] }) {
  return (
    <table className="ml-[14px] w-[124px] table-fixed border-collapse bg-white text-[10px]">
      <tbody>
        {rows.map(([k, v, dim]) => (
          <tr key={k} className={`h-[18px] border-b border-[#ebebeb] ${dim ? "text-[#7d7d7d]" : ""}`}>
            <th scope="row" className="w-[59px] border-r border-[#ebebeb] p-0 pl-[3px] text-left font-normal whitespace-nowrap">
              {k}
            </th>
            <td className={`p-0 pl-[3px] whitespace-nowrap ${dim ? "bg-[#f0f0f0]" : ""}`}>{v}</td>
          </tr>
        ))}
      </tbody>
    </table>
  );
}

const place = <button className="-ml-0.5 block h-4 w-[63px] border border-[#adadad] bg-[#e1e1e1] leading-none">Place...</button>;

function Properties() {
  return (
    <aside className="flex w-[148px] shrink-0 flex-col border-r border-[#a0a0a0] bg-[#e2e2e2] pt-[3px] pl-[5px]">
      <div className="flex flex-1 flex-col bg-[#f0f0f0] pr-0.5">
        <PanelTitle>Properties</PanelTitle>
        <h3 className="flex h-[23px] items-center gap-1 pl-[6px] text-[10px]">
          Viewport <span className="h-px flex-1 bg-[#a0a0a0]" />
        </h3>
        <PropTable
          rows={[
            ["Title", "Perspective"],
            ["Width", "879", true],
            ["Height", "531", true],
            [
              "Projection",
              <span className="relative flex">
                <select aria-label="Projection" className="-ml-px h-4 w-full appearance-none bg-transparent">
                  <option>Perspe...</option>
                </select>
                <svg viewBox="0 0 16 16" className="pointer-events-none absolute top-0 right-0 size-4 border border-[#b5b5b5] bg-[#e8e8e8]" fill="none">
                  <path d="M4 6l4 4 4-4" stroke="#444" />
                </svg>
              </span>,
            ],
          ]}
        />
        <h3 className="flex h-5 items-center pl-[8px] text-[10px]">Camera</h3>
        <PropTable
          rows={[
            ["Lens Len...", "50.0"],
            ["X Location", "120.565"],
            ["Y Location", "71.700"],
            ["Z Location", "93.285"],
            ["Location", place],
          ]}
        />
        <h3 className="flex h-5 items-center pl-[8px] text-[10px]">Target</h3>
        <PropTable
          rows={[
            ["X Target", "72.693"],
            ["Y Target", "29.048"],
            ["Z Target", "58.472"],
            ["Location", place],
          ]}
        />
        <h3 className="flex h-[21px] items-center pl-[8px] text-[10px]">Wallpaper</h3>
        <PropTable
          rows={[
            [
              "Filename",
              <span className="-ml-px flex items-center justify-between">
                (none)
                <button aria-label="Browse" className="h-4 w-4 border border-[#adadad] bg-[#e1e1e1] leading-none">
                  ...
                </button>
              </span>,
            ],
            ["Show", <label className="flex" aria-label="Show"><Check id="show" checked /></label>],
            ["Gray", <label className="flex" aria-label="Gray"><Check id="gray" checked /></label>],
          ]}
        />
      </div>
    </aside>
  );
}

const layers = [
  { name: "Default", color: "bg-black", kind: "selected" },
  { name: "----", color: "bg-[#ff0000]", kind: "" },
  { name: "Layer 02", color: "bg-[#000040]", kind: "current" },
  { name: "Layer 03", color: "bg-[#0000ff]", kind: "" },
  { name: "Layer 04", color: "bg-[#008000]", kind: "" },
  { name: "Layer 05", color: "bg-white", kind: "" },
];

function LayerRow({ name, color, kind }: { name: string; color: string; kind: string }) {
  const sel = kind === "selected";
  const cur = kind === "current";
  return (
    <tr className={`h-4 ${sel ? "bg-[#0078d7] text-white" : cur ? "bg-[#f0f0f0]" : ""}`}>
      <td className={`p-0 pl-[7px] leading-none whitespace-nowrap ${cur ? "text-[11px] font-bold" : ""}`}>{name}</td>
      <td className="p-0">
        {cur && (
          <svg viewBox="0 0 16 16" className="size-4" fill="none">
            <path d="M3.500 8.500l3 3 5.500-7" stroke="#000" strokeWidth="1.800" />
          </svg>
        )}
      </td>
      <td className="p-0">
        {!cur && (
          <svg viewBox="0 0 16 16" className="size-4" fill="none">
            <path d="M7.500 2C5 2 3.500 3.800 3.500 5.500 3.500 7.500 5.500 8 5.800 10.500h3.400C9.500 8 11.500 7.500 11.500 5.500 11.500 3.800 10 2 7.500 2Z" fill={sel ? "#5fb0f0" : "#ffff8c"} stroke={sel ? "#fff" : "#8a8430"} />
            <path d="M6 10.500h3V13l-1 1H7l-1-1Z" fill={sel ? "#0078d7" : "#ddd28a"} stroke={sel ? "#fff" : "#555"} />
          </svg>
        )}
      </td>
      <td className="p-0">
        {!cur && (
          <svg viewBox="0 0 16 16" className="size-4" fill="none" stroke={sel ? "#fff" : "#222"}>
            <rect x="3.500" y="7.500" width="7" height="6" fill={sel ? "#0078d7" : "#fff"} />
            <path d="M8.500 7.500V4.500c0-2.500 4-2.500 4.500 0v1" strokeWidth="1.300" />
          </svg>
        )}
      </td>
      <td className="p-0">
        <span className={`ml-0.5 block size-[11px] border ${sel ? "border-white" : "border-[#222]"} ${color}`} />
      </td>
      <td className="p-0">
        <span className={`ml-0.5 block size-3 rounded-full border ${sel ? "border-white bg-white" : "border-[#f0f0f0] bg-white"}`} />
      </td>
      <td className="p-0" />
    </tr>
  );
}

const layerTools: [string, React.ReactNode][] = [
  ["New layer", <path d="M4.500 2.500h5l3 3v8h-8ZM9.500 2.500v3h3" stroke="#222" strokeWidth="1.200" />],
  ["New sublayer", <path d="M3.500 2.500h4l2 2v6h-6ZM7.500 6.500h4l2 2v5.500h-6Z" fill="#f0f0f0" stroke="#222" strokeWidth="1.200" />],
  ["Delete", <path d="M4.500 5l7 7M11.500 5l-7 7" stroke="#999" strokeWidth="1.300" />],
  ["Move up", <path d="M8 5.500l4 4.500H4Z" fill="#999" />],
  ["Move down", <path d="M8 11L3.500 6h9Z" fill="#111" />],
  ["Move left", <path d="M5.500 8.500l4.500-4.500v9Z" fill="#999" />],
  ["Filter", <path d="M3.500 3.500h9.500l-3.500 5v5.500h-2.500v-5.500Z" stroke="#222" strokeWidth="1.200" />],
  ["Tools", <path d="M2.500 13.500l6-6M5.500 3.500c3-1 5 0 5.500 1.500l2.500 2-2.500 2.500L8.500 7 6 4.500" stroke="#222" strokeWidth="1.300" />],
];

function Layers() {
  return (
    <aside className="flex w-[195px] shrink-0 flex-col bg-[#e2e2e2] pt-[3px] pr-0.5 pl-1">
      <PanelTitle>Layers - All Layers</PanelTitle>
      <div className="ml-1 flex flex-1 flex-col bg-[#f0f0f0]">
        <div className="grid h-6 w-[176px] grid-cols-9 items-center justify-items-center">
          {layerTools.map(([n, i]) => (
            <button key={n} aria-label={n}>
              <svg viewBox="0 0 16 16" className="size-4" fill="none">
                {i}
              </svg>
            </button>
          ))}
          <button className="text-[11px] font-bold" aria-label="Help">
            ?
          </button>
        </div>
        <div className="flex flex-1 flex-col border border-[#828790] bg-white">
          <table className="w-full table-fixed border-collapse text-[10px]">
            <colgroup>
              <col className="w-[74px]" />
              <col className="w-4" />
              <col className="w-4" />
              <col className="w-4" />
              <col className="w-4" />
              <col className="w-4" />
              <col />
            </colgroup>
            <thead>
              <tr className="h-[23px] [&>th:not(:last-child)]:border-r [&>th]:border-[#e6e6e6]">
                <th scope="col" className="p-0 pl-[5px] text-left font-normal">Name</th>
                <th scope="col" aria-label="Current" />
                <th scope="col" aria-label="On" />
                <th scope="col" aria-label="Lock" />
                <th scope="col" aria-label="Color" />
                <th scope="col" aria-label="Material color" />
                <th scope="col" className="p-0 pl-0.5 text-left font-normal">Mater</th>
              </tr>
            </thead>
            <tbody>
              {layers.map((l) => (
                <LayerRow key={l.name} {...l} />
              ))}
            </tbody>
          </table>
          <div className="mt-auto flex h-4 items-center justify-between bg-[#f0f0f0] px-1">
            <svg viewBox="0 0 8 10" className="h-2.5 w-2" fill="none" stroke="#444" strokeWidth="1.500"><path d="M6 1L2 5l4 4" /></svg>
            <span className="ml-1 h-3.5 w-[70px] bg-[#cdcdcd]" />
            <span className="flex-1" />
            <svg viewBox="0 0 8 10" className="h-2.5 w-2" fill="none" stroke="#444" strokeWidth="1.500"><path d="M2 1l4 4-4 4" /></svg>
          </div>
        </div>
        <div className="h-0.5 bg-[#e2e2e2]" />
      </div>
    </aside>
  );
}

const menus = ["File", "Edit", "View", "Curve", "Surface", "Solid", "Mesh", "Dimension", "Transform", "Tools", "Analyze", "Render", "V-Ray", "Help"];

const snaps: [string, boolean, ("plain" | "off" | "track")?][] = [
  ["End", true],
  ["Near", true],
  ["Point", false],
  ["Mid", true],
  ["Cen", true],
  ["Int", true],
  ["Perp", false],
  ["Tan", false],
  ["Quad", false],
  ["Knot", false],
  ["Project", false, "off"],
  ["STrack", false, "track"],
  ["Disable", false, "off"],
];

function Grip() {
  return <span className="mx-px my-0.5 w-[3px] shrink-0 border-x border-dotted border-[#aaa]" />;
}

function Chev({ d }: { d: string }) {
  return (
    <svg viewBox="0 0 10 10" className="size-2.5" fill="none" stroke="#444" strokeWidth="1.600" aria-hidden="true">
      <path d={d} />
    </svg>
  );
}

export default function App() {
  return (
    <div className="flex h-screen overflow-hidden bg-[#f0f0f0] font-['Liberation_Sans',Arial,sans-serif] text-[#1a1a1a]">
      <Taskbar />
      <main className="relative flex min-w-0 flex-1 flex-col">
        <header className="bg-white font-['Roboto','Open_Sans',sans-serif] text-[11px]">
          <div className="flex h-[21px] items-center pl-0.5">
            <Rhino className="size-[15px]" />
            <h1 className="ml-[5px] flex-1">compost_1.3dm - Rhinoceros (Corporate) - [Perspective]</h1>
            <div className="flex h-5 items-center pr-0.5">
              <button aria-label="Minimize" className="grid w-[43px] place-items-center">
                <svg viewBox="0 0 12 12" className="size-3" fill="none" stroke="#222"><path d="M1.500 5.500h9" /></svg>
              </button>
              <button aria-label="Restore" className="grid w-[43px] place-items-center">
                <svg viewBox="0 0 12 12" className="size-3" fill="none" stroke="#222"><path d="M1.500 3.500h7v7h-7ZM3.500 3.500v-2h7v7h-2" /></svg>
              </button>
              <button aria-label="Close" className="grid w-[43px] place-items-center">
                <svg viewBox="0 0 12 12" className="size-3" fill="none" stroke="#222"><path d="M1.500 1.500l9 9M10.500 1.500l-9 9" /></svg>
              </button>
            </div>
          </div>
          <nav className="flex h-[19px] items-center gap-[13px] pl-[6px]" aria-label="Menu">
            {menus.map((m) => (
              <button key={m} className="whitespace-nowrap">
                {m}
              </button>
            ))}
          </nav>
        </header>
        <section className="flex border-t border-[#a8a8a8] bg-[#e2e2e2] pt-[3px] pr-0.5 pb-2 pl-0.5" aria-label="Command history">
          <Grip />
          <div className="flex flex-1 flex-col bg-white">
            <div className="flex h-[57px]">
              <div className="flex-1 pl-px text-[12px] leading-[14px]">
                <p>Drag objects:</p>
                <p>Command: _Undo</p>
                <p>Undoing Drag</p>
                <p>Drag objects:</p>
              </div>
              <div className="flex w-[15px] flex-col items-center justify-between bg-[#f0f0f0] py-[3px]">
                <Chev d="M1.500 7L5 3.500 8.500 7" />
                <span className="mt-2 h-4 w-full bg-[#cdcdcd]" />
                <Chev d="M1.500 3L5 6.500 8.500 3" />
              </div>
            </div>
            <div className="flex h-[17px] items-center border-t border-black pl-px">
              <label htmlFor="cmd" className="text-[11px] font-bold">
                Command:
              </label>
              <span className="ml-[4px] h-3.5 w-px bg-black" />
              <input id="cmd" type="text" className="h-4 min-w-0 flex-1 bg-transparent text-[12px] outline-none" />
              <div className="flex h-full w-[74px] items-center gap-[6px] bg-[#f0f0f0]">
                <svg viewBox="0 0 14 16" className="h-4 w-3.5" fill="none">
                  <path d="M1.500.5h11v15h-11ZM1.500 8h11" stroke="#aaa" />
                  <path d="M7 3l2.500 3h-5ZM7 13l2.500-3h-5Z" fill="#222" />
                </svg>
                <Chev d="M6.500 1.500L3 5l3.500 3.500" />
                <span className="ml-2.5">
                  <Chev d="M3.500 1.500L7 5 3.500 8.500" />
                </span>
              </div>
            </div>
          </div>
        </section>
        <div className="border-t border-[#b4b4b4]">
          <div className="flex h-[27px] w-[847px] border-r border-b border-[#b8b8b8] bg-[#e2e2e2] pl-px">
            <Grip />
            <div className="grid flex-1 grid-cols-[repeat(32,minmax(0,1fr))] items-center justify-items-center">
              {Object.entries(topIcons).map(([n, i]) => (
                <button key={n} aria-label={n}>
                  <Icon fly={topFly.includes(n)}>{i}</Icon>
                </button>
              ))}
            </div>
          </div>
          <div className="flex h-[27px] w-[191px] border-r border-b border-[#b8b8b8] bg-[#e2e2e2] pl-px">
            <Grip />
            <div className="grid flex-1 grid-cols-7 items-center justify-items-center">
              {Object.entries(vrayIcons).map(([n, i]) => (
                <button key={n} aria-label={n}>
                  <Icon>{i}</Icon>
                </button>
              ))}
            </div>
          </div>
        </div>
        <div className="flex min-h-0 flex-1">
          <div className="w-[54px] shrink-0 border-t border-[#b8b8b8]">
            <div className="grid grid-cols-2 border-b border-[#a8a8a8] bg-[#e2e2e2]">
              <span className="mx-1 mt-1 h-[3px] border-y border-dotted border-[#aaa]" />
              <span className="mx-1 mt-1 h-[3px] border-y border-dotted border-[#aaa]" />
              <div className="col-span-2 grid h-[393px] grid-cols-2 grid-rows-15">
                {toolIcons.map(([n, i, f]) => (
                  <button key={n} aria-label={n} className="grid place-items-center odd:border-r odd:border-[#b0b0b0]">
                    <Icon fly={f}>{i}</Icon>
                  </button>
                ))}
              </div>
            </div>
          </div>
          <section className="relative min-w-0 flex-1 overflow-hidden">
            <div className="absolute inset-0">
              <Scene />
            </div>
            <h2 className="absolute top-0 left-0 h-4 w-[86px] bg-[#9ab5d6] pl-[7px] text-[13px] leading-4 font-bold text-black">Perspective</h2>
          </section>
          <Properties />
          <Layers />
        </div>
        <div className="flex h-[21px] w-[697px] border-r border-b border-[#b0b0b0] pl-0.5">
          <Grip />
          <div className="ml-[3px] grid w-[682px] grid-cols-[repeat(13,minmax(0,1fr))] items-center text-[11px]">
            {snaps.map(([n, c, tone]) => (
              <label key={n} htmlFor={`snap-${n}`} className="flex items-center gap-1 whitespace-nowrap">
                <Check id={`snap-${n}`} checked={c} tone={tone} />
                {n}
              </label>
            ))}
          </div>
        </div>
        <footer className="flex h-5 items-center text-[11px] whitespace-nowrap">
          <span className="w-[221px] pl-[140px]">y -92.25</span>
          <span className="w-[166px]">z 0.00</span>
          <span className="flex w-[156px] items-center gap-[3px]">
            <span className="size-[11px] bg-[#000040]" />
            Layer 02
          </span>
          <div className="flex h-[18px] items-stretch [&>button]:border-l [&>button]:border-[#dcdcdc]">
            <button className="w-[44px]">Snap</button>
            <button className="w-[43px] bg-[#f8f8f8] font-bold">Ortho</button>
            <button className="w-[43px]">Planar</button>
            <button className="w-[44px] bg-[#f8f8f8] font-bold">Osnap</button>
            <button className="w-[102px] border-r">Record History</button>
          </div>
        </footer>
        <div className="absolute bottom-0 left-[7px] flex h-[26px] w-[135px] bg-white shadow-[0_0_5px_rgba(0,0,0,0.4)]">
          <button aria-label="Restore window" className="flex w-12 items-center justify-center">
            <svg viewBox="0 0 24 14" className="h-3.5 w-6" fill="none" stroke="#888">
              <path d="M1 8a2.500 2.500 0 1 0 5 1l1-3-3-1ZM3 5l2-4 3 1-1 4" stroke="#bbb" />
              <path d="M12.500 4.500h6v6h-6ZM14.500 4.500v-2h6v6h-2" />
            </svg>
          </button>
          <button aria-label="Maximize window" className="grid w-11 place-items-center">
            <span className="size-2.5 border border-[#aaa]" />
          </button>
          <button aria-label="Close window" className="grid flex-1 place-items-center bg-[#e81123]">
            <svg viewBox="0 0 12 12" className="size-3" fill="none" stroke="#fff" strokeWidth="1.200">
              <path d="M1.500 1.500l9 9M10.500 1.500l-9 9" />
            </svg>
          </button>
        </div>
      </main>
    </div>
  );
}
